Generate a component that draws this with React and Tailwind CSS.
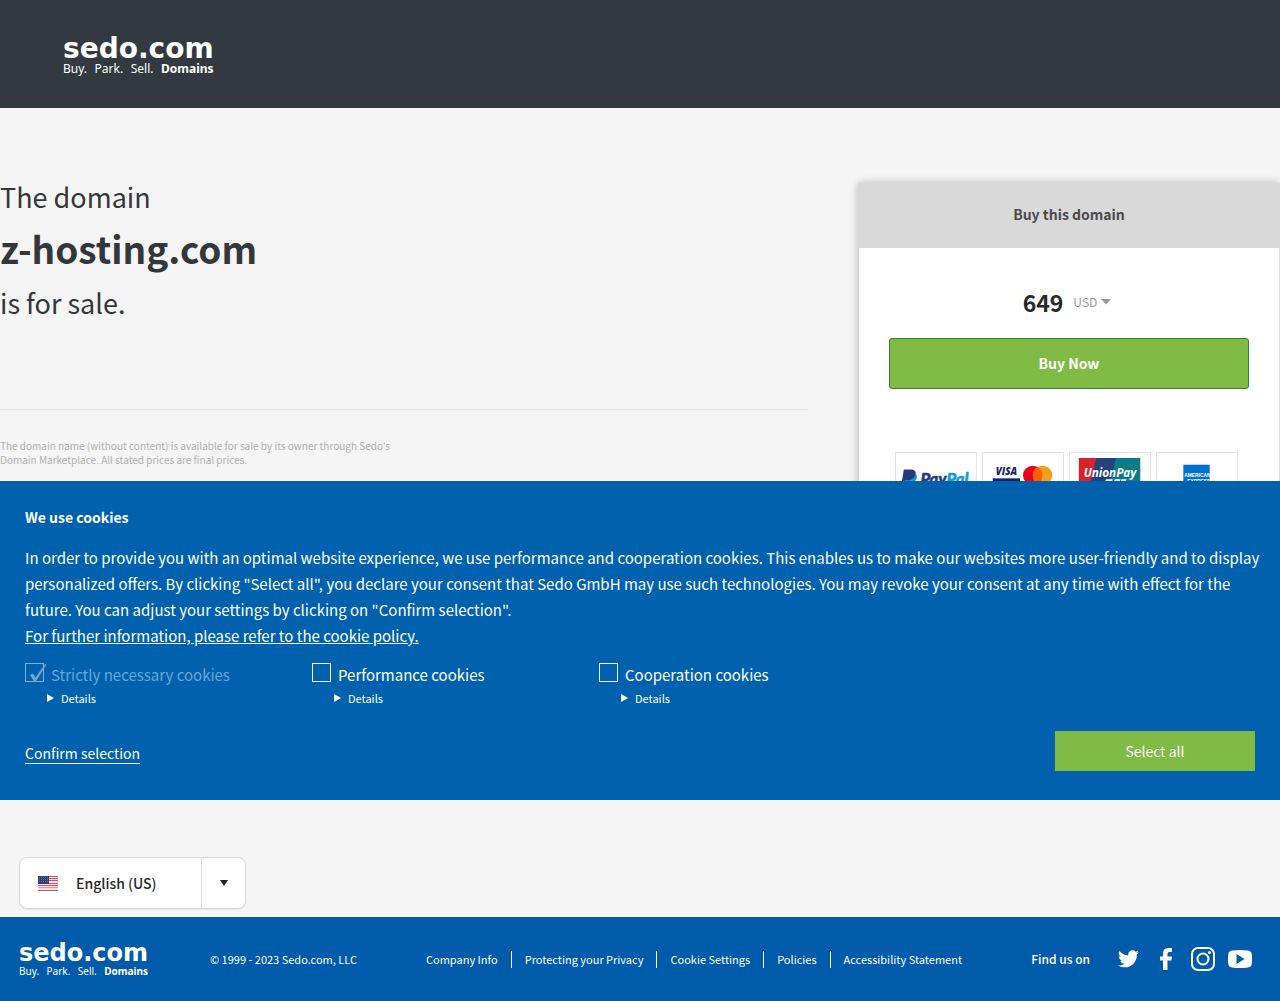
import React from "react";

const sans = "font-['Noto_Sans_CJK_SC','Noto_Sans',sans-serif]";

function Logo({ small }) {
  return (
    <a href="#" aria-label="sedo.com" className="block w-max text-white whitespace-nowrap">
      <span className={small ? "block font-['DejaVu_Sans',sans-serif] text-[24px] leading-[24px] font-bold" : "block font-['DejaVu_Sans',sans-serif] text-[28px] leading-[28px] font-bold"}>sedo.com</span>
      <span className={small ? "flex justify-between font-['Noto_Sans',sans-serif] text-[10px] leading-[12px]" : "flex justify-between font-['Noto_Sans',sans-serif] text-[12px] leading-[12px]"}>
        <span>Buy.</span>
        <span>Park.</span>
        <span>Sell.</span>
        <b>Domains</b>
      </span>
    </a>
  );
}

function PayPal() {
  return (
    <svg viewBox="0 0 82 54" className="block w-full">
      <path d="M8 17h7c4 0 6 2 5 6-1 4-4 6-8 6h-2l-1 6H5z" fill="#253b80" />
      <path d="M20 21c3 2 2 10-7 10h-1l-1 6H7l2-9h3c4 0 7-2 8-7z" fill="#179bd7" />
      <text x="25" y="33" fontSize="17" fontWeight="900" fontStyle="italic" fontFamily="Lato" fill="#253b80" stroke="#253b80" strokeWidth=".5">Pay<tspan fill="#179bd7" stroke="#179bd7">Pal</tspan></text>
    </svg>
  );
}

function VisaMastercard() {
  return (
    <svg viewBox="0 0 82 54" className="block w-full">
      <text x="13" y="23" fontSize="10" fontWeight="800" fontStyle="italic" fontFamily="Open Sans" fill="#1a1f71">VISA</text>
      <path d="M10 26h28v8H10z" fill="#1a1f71" />
      <circle cx="51" cy="23" r="10" fill="#eb001b" />
      <circle cx="61" cy="23" r="10" fill="#f79e1b" />
      <path d="M56 14.400a10 10 0 0 1 0 17.200a10 10 0 0 1 0-17.200z" fill="#ff5f00" />
    </svg>
  );
}

function UnionPay() {
  return (
    <svg viewBox="0 0 82 54" className="block w-full">
      <path d="M9 5h20l-9 39H9z" fill="#d8232a" />
      <path d="M27 5h21l-9 39H18z" fill="#24417c" />
      <path d="M47 5h25v39H38z" fill="#097d85" />
      <text x="14" y="25" fontSize="12" fontWeight="bold" fontStyle="italic" fontFamily="Open Sans" fill="#fff">UnionPay</text>
      <path d="M37 27h7l-1 2h-7zM46 27h6l-1 2h-6zM53 27h5l-1 2h-5z" fill="#fff" />
    </svg>
  );
}

function Amex() {
  return (
    <svg viewBox="0 0 82 54" className="block w-full">
      <path d="M27 12h27v27H27z" fill="#0070cd" />
      <text x="28" y="25" fontSize="5" fontWeight="bold" fontFamily="Liberation Sans" fill="#fff">AMERICAN</text>
      <text x="31" y="31" fontSize="5" fontWeight="bold" fontFamily="Liberation Sans" fill="#fff">EXPRESS</text>
    </svg>
  );
}

function Flag() {
  return (
    <svg viewBox="0 0 20 15" className="block h-[15px] w-5">
      <path d="M0 0h20v15H0z" fill="#f3dfe1" />
      <path d="M0 0h20v1H0zM0 2h20v1H0zM0 4h20v1H0zM0 7h20v1H0zM0 9h20v1H0zM0 11.500h20v.5H0zM0 14h20v1H0z" fill="#c05a68" />
      <path d="M0 0h11v8H0z" fill="#2f3f73" />
      <path d="M1 1.500h9M1 3.500h9M1 5.500h9" stroke="#8590b3" strokeWidth=".6" strokeDasharray="1 1" />
    </svg>
  );
}

function CookieOption({ id, label, locked }) {
  return (
    <div className="w-[287px]">
      <div className="flex items-start gap-[7px]">
        <span className={locked ? "relative h-[19px] w-[19px] opacity-50" : "relative h-[19px] w-[19px]"}>
          <input id={id} type="checkbox" defaultChecked={locked} disabled={locked} className="peer block h-[19px] w-[19px] appearance-none border border-white" />
          <svg viewBox="0 0 22 20" className="pointer-events-none absolute top-0 left-0 hidden h-5 w-[22px] peer-checked:block">
            <path d="M5 12L8 10.500l2.500 4L20 1l1.500 .5L11.500 17.500 9 18.500z" fill="#e4e4e4" />
          </svg>
        </span>
        <label htmlFor={id} className={locked ? "text-[15px] leading-6 text-[#69a5d6]" : "text-[15px] leading-6"}>{label}</label>
      </div>
      <details className="ml-[22px]">
        <summary className="flex list-none items-center gap-[7px] text-[11px] leading-[22px]">
          <svg viewBox="0 0 7 8" className="h-2 w-[7px]"><path d="M0 0l7 4-7 4z" fill="#fff" /></svg>
          Details
        </summary>
      </details>
    </div>
  );
}

const links = ["Company Info", "Protecting your Privacy", "Cookie Settings", "Policies", "Accessibility Statement"];

export default function App() {
  return (
    <div className={`${sans} relative flex min-h-screen flex-col bg-[#f5f5f5] text-[#33373b]`}>
      <header className="h-[108px] bg-[#333940] px-[63px] pt-[35px]">
        <Logo />
      </header>

      <main className="flex items-start justify-between pt-[75px]">
        <div className="mr-[50px] flex-1">
          <h1 className="text-[27px] leading-[28px]">
            The domain
            <strong className="block pt-[11px] pb-[15px] text-[37px] leading-[52px] font-bold">z-hosting.com</strong>
            is for sale.
          </h1>
          <p className="mt-[92px] border-t border-[#e3e3e3] pt-[29px] text-[10px] leading-[14px] text-[#b0b0b0]">
            The domain name (without content) is available for sale by its owner through Sedo's
            <br />
            Domain Marketplace. All stated prices are final prices.
          </p>
        </div>

        <section className="w-[422px] border border-[#d9d9d9] bg-white shadow-[0_0_8px_rgba(0,0,0,0.25)]">
          <h2 className="bg-[#d9d9d9] pb-1 text-center text-[14px] leading-[60px] font-bold text-[#4a4a4a]">Buy this domain</h2>
          <div className="px-[30px] pt-[38px]">
            <div className="flex items-center justify-center gap-[10px] pr-1">
              <strong className="text-[23px] leading-8 text-[#26292b]">649</strong>
              <span className="flex items-center gap-1">
                <select aria-label="Currency" className="appearance-none bg-transparent text-[12px] leading-8 text-[#999]">
                  <option>USD</option>
                </select>
                <svg viewBox="0 0 10 6" className="h-[6px] w-[10px]"><path d="M0 0h10L5 5.500z" fill="#999" /></svg>
              </span>
            </div>
            <button type="button" className="mt-5 block h-[51px] w-full rounded-[3px] border border-[#2e8540] bg-[#80bb45] text-[14px] font-bold text-white">Buy Now</button>
            <ul className="mt-[63px] flex justify-center gap-[5px] pr-[5px] pb-[60px]">
              {[PayPal, VisaMastercard, UnionPay, Amex].map((Card, i) => (
                <li key={i} className="w-[82px] border border-[#e4e4e4]"><Card /></li>
              ))}
            </ul>
          </div>
        </section>
      </main>

      <section aria-label="Cookie consent" className="absolute inset-x-0 top-[481px] bg-[#0062ae] px-[25px] pt-6 pb-[29px] text-[15px] text-white">
        <h2 className="text-[14px] leading-6 font-bold">We use cookies</h2>
        <p className="-mr-4 mt-4 leading-[26px]">
          In order to provide you with an optimal website experience, we use performance and cooperation cookies. This enables us to make our websites more user-friendly and to display personalized offers. By clicking "Select all", you declare your consent that Sedo GmbH may use such technologies. You may revoke your consent at any time with effect for the future. You can adjust your settings by clicking on "Confirm selection".
          <br />
          <a href="#" className="underline">For further information, please refer to the cookie policy.</a>
        </p>
        <div className="mt-[14px] flex">
          <CookieOption id="necessary" label="Strictly necessary cookies" locked />
          <CookieOption id="performance" label="Performance cookies" />
          <CookieOption id="cooperation" label="Cooperation cookies" />
        </div>
        <div className="mt-[22px] flex items-center justify-between">
          <button type="button" className="mt-1 border-b border-white text-[14px] leading-5">Confirm selection</button>
          <button type="button" className="h-10 w-[200px] bg-[#80bb45] text-[14px]">Select all</button>
        </div>
      </section>

      <div className="mt-auto mb-2 ml-[19px] w-[227px]">
        <div className="relative">
          <select aria-label="Language" className="block h-[52px] w-full appearance-none rounded-lg border border-[#d6d6d6] bg-white pl-[56px] text-[14px] font-medium text-[#26292b] shadow-xs">
            <option>English (US)</option>
          </select>
          <span className="pointer-events-none absolute inset-y-0 left-[19px] flex items-center pt-px"><Flag /></span>
          <span className="pointer-events-none absolute inset-y-px right-px flex w-[44px] items-center justify-center border-l border-[#dedede]">
            <svg viewBox="0 0 8 6" className="h-[6px] w-2"><path d="M0 0h8L4 6z" fill="#222" /></svg>
          </span>
        </div>
      </div>

      <footer className="flex h-[84px] items-center bg-[#005bab] px-[19px] text-[11px] text-white">
        <div className="w-[191px]"><Logo small /></div>
        <p className="w-[203px]">© 1999 - 2023 Sedo.com, LLC</p>
        <nav className="flex divide-x divide-white">
          {links.map((l) => (
            <a key={l} href="#" className="px-[13px] leading-[17px]">{l}</a>
          ))}
        </nav>
        <div className="mr-[9px] ml-auto flex items-center">
          <span className="mr-[28px] text-[12px] font-medium">Find us on</span>
          <a href="#" aria-label="Twitter" className="mr-[21px]">
            <svg viewBox="0 0 24 20" className="h-[18px] w-[21px]" fill="#fff"><path d="M24 2.370a9.600 9.600 0 0 1-2.830.78A4.940 4.940 0 0 0 23.340.420a9.900 9.900 0 0 1-3.130 1.200 4.920 4.920 0 0 0-8.390 4.490A13.980 13.980 0 0 1 1.670.970a4.920 4.920 0 0 0 1.520 6.570 4.900 4.900 0 0 1-2.230-.61v.06a4.930 4.930 0 0 0 3.950 4.830 4.900 4.900 0 0 1-2.220.08 4.930 4.930 0 0 0 4.600 3.420A9.880 9.880 0 0 1 0 17.360a13.940 13.940 0 0 0 7.550 2.210c9.050 0 14-7.500 14-13.980l-.02-.64A10 10 0 0 0 24 2.370z" /></svg>
          </a>
          <a href="#" aria-label="Facebook" className="mr-[19px]">
            <svg viewBox="0 0 12 22" className="h-[22px] w-3" fill="#fff"><path d="M3 22V12.500H0v-4h3V6c0-4 2-6 5.500-6H12v4H9.500C8 4 7.500 4.800 7.500 6v2.500H12l-.6 4H7.500V22z" /></svg>
          </a>
          <a href="#" aria-label="Instagram" className="mr-[13px]">
            <svg viewBox="0 0 24 24" className="size-6" fill="none" stroke="#fff" strokeWidth="2"><rect x="1" y="1" width="22" height="22" rx="6" /><circle cx="12" cy="12" r="5.500" /><circle cx="18.500" cy="5.500" r="1.500" fill="#fff" stroke="none" /></svg>
          </a>
          <a href="#" aria-label="YouTube">
            <svg viewBox="0 0 24 18" className="h-[18px] w-6" fill="#fff"><path fillRule="evenodd" d="M4 .5Q12-.5 20 .5 23.500 1 23.700 4 24.300 9 23.700 14 23.500 17 20 17.500 12 18.500 4 17.500.5 17 .3 14-.3 9 .3 4 .5 1 4 .5zM8.500 4v10l8-5z" /></svg>
          </a>
        </div>
      </footer>
    </div>
  );
}
